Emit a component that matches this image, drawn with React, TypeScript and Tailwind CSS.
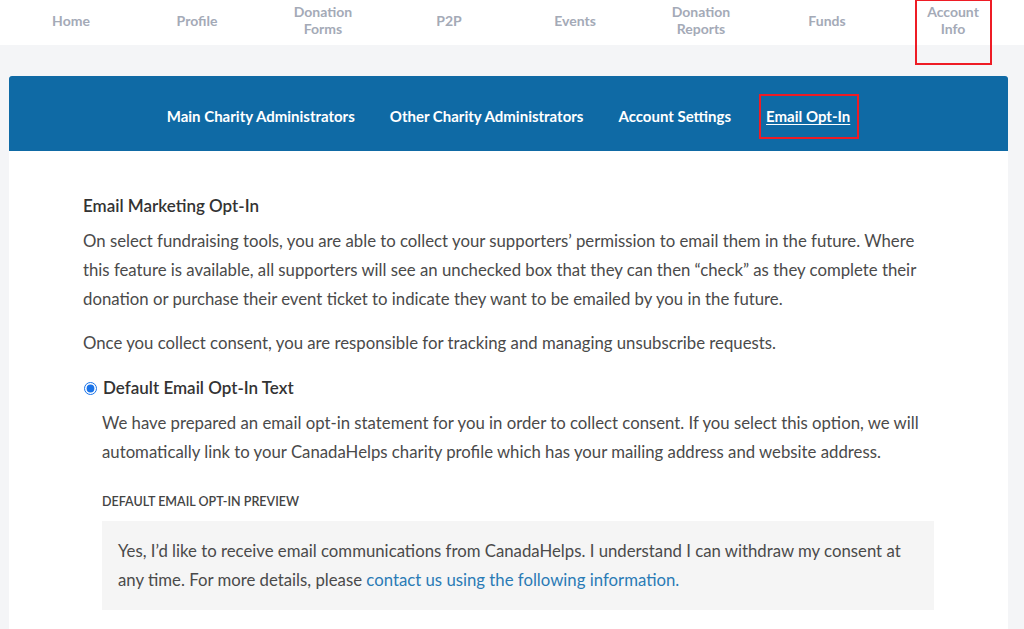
import React from "react";

const topNav = [
  ["Home"],
  ["Profile"],
  ["Donation", "Forms"],
  ["P2P"],
  ["Events"],
  ["Donation", "Reports"],
  ["Funds"],
  ["Account", "Info"],
];

const subNav = [
  "Main Charity Administrators",
  "Other Charity Administrators",
  "Account Settings",
  "Email Opt-In",
];

const App: React.FC = () => {
  return (
    <div className="min-h-[629px] bg-[#f4f5f7] font-['Lato',sans-serif] text-[#4a4a4a]">
      <div className="bg-white h-[45px] px-[8px] grid grid-cols-8">
        {topNav.map((lines) => {
          const active = lines[0] === "Account";
          return (
            <div key={lines.join(" ")} className="flex justify-center">
              <div
                className={
                  "flex flex-col items-center text-[14px] font-bold leading-[17px] text-[#a4aab7] " +
                  (active
                    ? "border-2 border-[#ee1c25] h-[66px] w-[77px] pt-[2px] -mt-[1px] relative z-10"
                    : "justify-center h-[45px] pb-[5px]")
                }
              >
                {lines.map((l) => (
                  <span key={l}>{l}</span>
                ))}
              </div>
            </div>
          );
        })}
      </div>

      <div className="mt-[31px] ml-[9px] w-[999px] bg-white">
        <div className="h-[75px] bg-[#0f6aa5] rounded-t-[3px] flex items-center justify-center gap-[35px] pt-[6px] text-white text-[15px] font-bold">
          {subNav.map((s) =>
            s === "Email Opt-In" ? (
              <span
                key={s}
                className="border-2 border-[#ee1c25] pl-[5px] pr-[7px] py-[9px] -ml-[7px] -mr-[9px] underline underline-offset-2"
              >
                {s}
              </span>
            ) : (
              <span key={s}>{s}</span>
            )
          )}
        </div>

        <div className="px-[74px] pt-[43px] pb-[40px]">
          <h2 className="text-[17px] font-semibold text-[#333] leading-[24px]">
            Email Marketing Opt-In
          </h2>
          <p className="mt-[8px] text-[16.75px] leading-[29px]">
            On select fundraising tools, you are able to collect your supporters’ permission to email them in the future. Where this feature is available, all supporters will see an unchecked box that they can then “check” as they complete their donation or purchase their event ticket to indicate they want to be emailed by you in the future.
          </p>
          <p className="mt-[15px] text-[16.75px] leading-[29px]">
            Once you collect consent, you are responsible for tracking and managing unsubscribe requests.
          </p>

          <label className="mt-[19px] flex items-center gap-[6px]">
            <input
              type="radio"
              checked
              readOnly
              className="ml-[1px] w-[13px] h-[13px] accent-[#1a73e8]"
            />
            <span className="text-[17px] font-semibold text-[#333] leading-[24px]">
              Default Email Opt-In Text
            </span>
          </label>

          <div className="pl-[19px]">
            <p className="mt-[8px] text-[16.75px] leading-[29px]">
              We have prepared an email opt-in statement for you in order to collect consent. If you select this option, we will automatically link to your CanadaHelps charity profile which has your mailing address and website address.
            </p>
            <div className="mt-[28px] text-[12.5px] font-semibold uppercase text-[#444] leading-[16px]">
              Default Email Opt-In Preview
            </div>
            <div className="mt-[11px] bg-[#f5f5f5] px-[16px] pt-[15px] pb-[16px] text-[16.75px] leading-[29px]">
              Yes, I’d like to receive email communications from CanadaHelps. I understand I can withdraw my consent at any time. For more details, please{" "}
              <a className="text-[#2a7bb5]">contact us using the following information.</a>
            </div>
          </div>
        </div>
      </div>
    </div>
  );
};

export default App;
